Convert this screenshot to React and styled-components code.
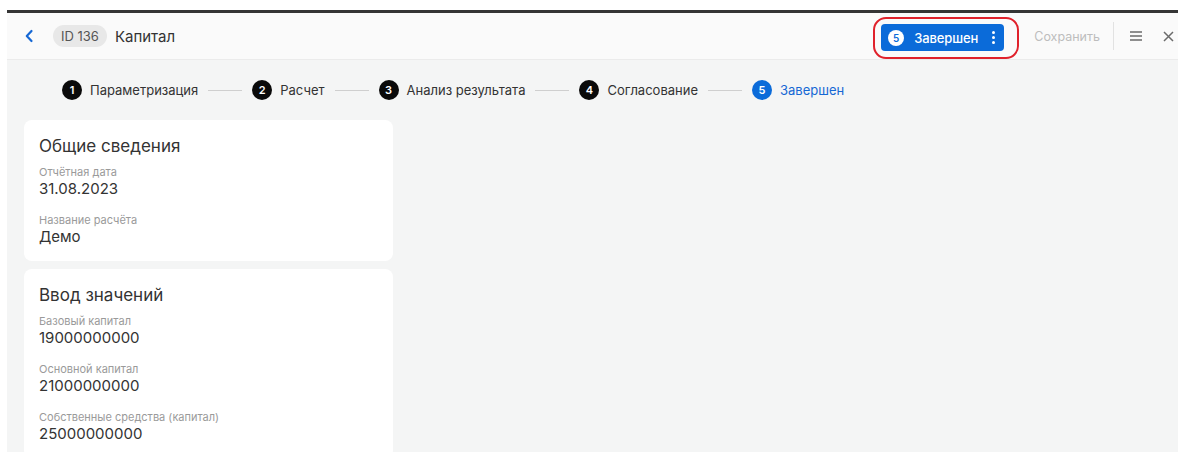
import React from "react";
import styled, { createGlobalStyle } from "styled-components";

const GlobalStyle = createGlobalStyle`
  body {
    margin: 0;
    background: #ffffff;
    font-family: Inter, "Noto Sans", sans-serif;
    color: #333333;
  }
`;

const Page = styled.div`
  padding: 10px 0 0 7px;
  height: 452px;
  box-sizing: border-box;
  overflow: hidden;
`;

const Frame = styled.div`
  border-top: 3px solid #353535;
  background: #f4f5f5;
  height: 100%;
`;

const Header = styled.div`
  display: flex;
  align-items: center;
  height: 46px;
  padding: 0 4px 0 17px;
  background: #fafafa;
  border-bottom: 1px solid #ebebeb;
`;

const BackButton = styled.button`
  display: flex;
  align-items: center;
  border: none;
  background: none;
  padding: 0;
  width: 12px;
  color: #1668d4;
  margin-right: 17px;
`;

const IdChip = styled.span`
  display: inline-flex;
  align-items: center;
  height: 22px;
  padding: 0 8px;
  border-radius: 11px;
  background: #e8e8e8;
  color: #555555;
  font-size: 13px;
`;

const Title = styled.span`
  margin-left: 8px;
  font-size: 15px;
  font-weight: 400;
  color: #333333;
`;

const Spacer = styled.div`
  flex: 1;
`;

const Highlight = styled.div`
  display: flex;
  padding: 5px 13px 6px 6px;
  border: 2px solid #e0212b;
  border-radius: 13px;
  margin-top: 4px;
`;

const StatusButton = styled.button`
  display: flex;
  align-items: center;
  height: 27px;
  padding: 0 9px 0 7px;
  border: none;
  border-radius: 4px;
  background: #0b6bd9;
  color: #ffffff;
  font-family: inherit;
  font-size: 13px;
  font-weight: 500;
  letter-spacing: -0.1px;
`;

const StatusNumber = styled.span`
  display: inline-flex;
  align-items: center;
  justify-content: center;
  width: 16px;
  height: 16px;
  border-radius: 50%;
  background: #ffffff;
  color: #0b6bd9;
  font-size: 10px;
  font-weight: 600;
  margin-right: 10px;
`;

const Dots = styled.span`
  display: flex;
  flex-direction: column;
  gap: 2px;
  margin-left: 14px;

  i {
    width: 3px;
    height: 3px;
    border-radius: 50%;
    background: #ffffff;
  }
`;

const SaveButton = styled.button`
  border: none;
  background: none;
  padding: 0;
  margin-left: 15px;
  font-family: inherit;
  font-size: 12.5px;
  color: #bdbdbd;
`;

const Divider = styled.span`
  width: 1px;
  height: 28px;
  background: #e2e2e2;
  margin: 0 16px 0 13px;
`;

const IconButton = styled.button`
  display: flex;
  align-items: center;
  border: none;
  background: none;
  padding: 0;
  color: #6b6b6b;
  margin-left: ${(p) => p.$gap || 0}px;
`;

const Stepper = styled.div`
  display: flex;
  align-items: center;
  padding: 20px 0 20px 55px;
`;

const Step = styled.div`
  display: flex;
  align-items: center;
  gap: 8px;
  font-size: 13px;
  color: ${(p) => (p.$active ? "#1668d4" : "#333333")};
`;

const StepNumber = styled.span`
  display: inline-flex;
  align-items: center;
  justify-content: center;
  width: 20px;
  height: 20px;
  border-radius: 50%;
  background: ${(p) => (p.$active ? "#0b6bd9" : "#0a0a0a")};
  color: #ffffff;
  font-size: 11px;
  font-weight: 600;
`;

const StepLine = styled.span`
  width: 34px;
  height: 1px;
  background: #cfcfcf;
  margin: 0 10px;
`;

const Content = styled.div`
  display: flex;
  flex-direction: column;
  gap: 8px;
  padding: 0 0 0 17px;
`;

const Card = styled.section`
  width: 369px;
  box-sizing: border-box;
  padding: 15px 15px 14px;
  background: #ffffff;
  border-radius: 8px;
`;

const CardTitle = styled.h2`
  margin: 0 0 8px;
  font-size: 17px;
  line-height: 22px;
  font-weight: 400;
  color: #333333;
`;

const Field = styled.div`
  & + & {
    margin-top: 14px;
  }
`;

const Label = styled.div`
  font-size: 11px;
  line-height: 14px;
  color: #9a9a9a;
`;

const Value = styled.div`
  font-size: 15px;
  line-height: 20px;
  color: #333333;
`;

const steps = [
  "Параметризация",
  "Расчет",
  "Анализ результата",
  "Согласование",
  "Завершен",
];

const sections = [
  {
    title: "Общие сведения",
    fields: [
      ["Отчётная дата", "31.08.2023"],
      ["Название расчёта", "Демо"],
    ],
  },
  {
    title: "Ввод значений",
    fields: [
      ["Базовый капитал", "19000000000"],
      ["Основной капитал", "21000000000"],
      ["Собственные средства (капитал)", "25000000000"],
    ],
  },
];

const App = () => {
  return (
    <Page>
      <GlobalStyle />
      <Frame>
        <Header>
          <BackButton>
            <svg width="10" height="14" viewBox="0 0 10 14">
              <path d="M7.5 2 L2.8 7 L7.5 12" fill="none" stroke="currentColor" strokeWidth="2.2" strokeLinecap="round" strokeLinejoin="round" />
            </svg>
          </BackButton>
          <IdChip>ID 136</IdChip>
          <Title>Капитал</Title>
          <Spacer />
          <Highlight>
            <StatusButton>
              <StatusNumber>5</StatusNumber>
              Завершен
              <Dots>
                <i />
                <i />
                <i />
              </Dots>
            </StatusButton>
          </Highlight>
          <SaveButton>Сохранить</SaveButton>
          <Divider />
          <IconButton>
            <svg width="12" height="12" viewBox="0 0 12 12">
              <path d="M0 2h12M0 6h12M0 10h12" stroke="currentColor" strokeWidth="1.6" />
            </svg>
          </IconButton>
          <IconButton $gap={21}>
            <svg width="11" height="11" viewBox="0 0 11 11">
              <path d="M1 1l9 9M10 1l-9 9" stroke="currentColor" strokeWidth="1.5" />
            </svg>
          </IconButton>
        </Header>

        <Stepper>
          {steps.map((name, i) => {
            const active = i === steps.length - 1;
            return (
              <React.Fragment key={name}>
                {i > 0 && <StepLine />}
                <Step $active={active}>
                  <StepNumber $active={active}>{i + 1}</StepNumber>
                  {name}
                </Step>
              </React.Fragment>
            );
          })}
        </Stepper>

        <Content>
          {sections.map((s) => (
            <Card key={s.title}>
              <CardTitle>{s.title}</CardTitle>
              {s.fields.map(([label, value]) => (
                <Field key={label}>
                  <Label>{label}</Label>
                  <Value>{value}</Value>
                </Field>
              ))}
            </Card>
          ))}
        </Content>
      </Frame>
    </Page>
  );
};

export default App;
